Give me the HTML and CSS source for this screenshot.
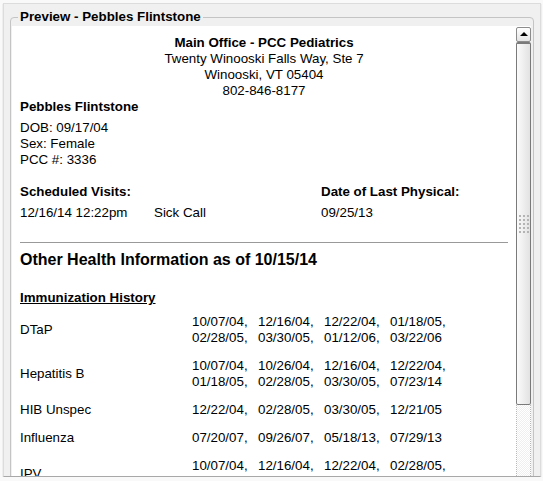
FILE: index.html
```html
<!DOCTYPE html>
<html lang="en">
<head>
  <meta charset="UTF-8" />
  <title>Preview - Pebbles Flintstone</title>
  <link rel="stylesheet" href="styles.css">
</head>
<body>
  <div class="panel">
    <fieldset class="preview">
      <legend>Preview - Pebbles Flintstone</legend>
      <div class="viewer">
        <div class="content">
          <!-- office header -->
          <div class="office">
            <div class="bold">Main Office - PCC Pediatrics</div>
            <div>Twenty Winooski Falls Way, Ste 7</div>
            <div>Winooski, VT 05404</div>
            <div>802-846-8177</div>
          </div>

          <!-- patient -->
          <div class="bold">Pebbles Flintstone</div>
          <div class="demo">
            <div>DOB: 09/17/04</div>
            <div>Sex: Female</div>
            <div>PCC #: 3336</div>
          </div>

          <!-- visits -->
          <div class="visits">
            <div class="bold">Scheduled Visits:</div>
            <div class="bold">Date of Last Physical:</div>
            <div class="visit-row">
              <span>12/16/14 12:22pm</span>
              <span>Sick Call</span>
            </div>
            <div>09/25/13</div>
          </div>

          <hr>

          <h2>Other Health Information as of 10/15/14</h2>
          <div class="section-title">Immunization History</div>

          <div class="imm-list">
            <div class="imm-row">
              <div>DTaP</div>
              <div class="dates">
                <span>10/07/04,</span><span>12/16/04,</span><span>12/22/04,</span><span>01/18/05,</span>
                <span>02/28/05,</span><span>03/30/05,</span><span>01/12/06,</span><span>03/22/06</span>
              </div>
            </div>
            <div class="imm-row">
              <div>Hepatitis B</div>
              <div class="dates">
                <span>10/07/04,</span><span>10/26/04,</span><span>12/16/04,</span><span>12/22/04,</span>
                <span>01/18/05,</span><span>02/28/05,</span><span>03/30/05,</span><span>07/23/14</span>
              </div>
            </div>
            <div class="imm-row">
              <div>HIB Unspec</div>
              <div class="dates">
                <span>12/22/04,</span><span>02/28/05,</span><span>03/30/05,</span><span>12/21/05</span>
              </div>
            </div>
            <div class="imm-row">
              <div>Influenza</div>
              <div class="dates">
                <span>07/20/07,</span><span>09/26/07,</span><span>05/18/13,</span><span>07/29/13</span>
              </div>
            </div>
            <div class="imm-row">
              <div class="ipv">IPV</div>
              <div class="dates">
                <span>10/07/04,</span><span>12/16/04,</span><span>12/22/04,</span><span>02/28/05,</span>
              </div>
            </div>
          </div>
        </div>

        <!-- fake scrollbar -->
        <div class="scrollbar">
          <div class="sb-up"><span class="arrow"></span></div>
          <div class="sb-thumb"><span class="grip"></span></div>
          <div class="sb-track"></div>
        </div>
      </div>
    </fieldset>
  </div>
</body>
</html>
```

FILE: styles.css
```css
body {
  margin: 0;
  background: #f9f9f9;
  font-family: "Liberation Sans", Arial, sans-serif;
  font-size: 13.33px;
  line-height: 16px;
  color: #000;
  overflow: hidden;
}
.panel {
  margin: 3px 2px 0 3px;
  height: 474px;
  box-sizing: border-box;
  border: 1px solid #dcdcdc;
  border-bottom: 1px solid #a8a8a8;
  background: #f0f0f0;
  padding: 5px 6px 0 6px;
  box-shadow: 0 1px 1px rgba(0, 0, 0, 0.25);
  overflow: hidden;
}
.preview {
  margin: 0;
  padding: 1px 1px 0 1px;
  border: 1px solid #c4c4c4;
  border-radius: 4px;
  height: 520px;
}
.preview legend {
  margin-left: 6px;
  padding: 0 2px;
  font-weight: bold;
  line-height: 16px;
}
.viewer {
  display: flex;
  background: #fff;
  margin-right: 1px;
  height: 470px;
}
.content {
  flex: 1;
  overflow: hidden;
  padding: 9px 8px 0 8px;
}
.bold {
  font-weight: bold;
}
.office {
  text-align: center;
}
.demo {
  margin-top: 5px;
}
.visits {
  display: grid;
  grid-template-columns: 301px 1fr;
  row-gap: 5px;
  margin-top: 16px;
}
.visit-row {
  display: grid;
  grid-template-columns: 134px 1fr;
}
hr {
  border: 0;
  border-top: 1px solid #999;
  margin: 21px 0 0 0;
}
h2 {
  font-size: 16px;
  line-height: 18px;
  margin: 8px 0 0 0;
}
.section-title {
  font-weight: bold;
  text-decoration: underline;
  margin-top: 21px;
}
.imm-list {
  margin-top: 2px;
}
.imm-row {
  display: grid;
  grid-template-columns: 172px 1fr;
  align-items: center;
  padding: 6px 0;
}
.dates {
  display: grid;
  grid-template-columns: repeat(4, 66px);
}
.ipv {
  align-self: end;
  margin-bottom: -8px;
}

/* scrollbar */
.scrollbar {
  width: 15px;
  display: flex;
  flex-direction: column;
  padding-top: 1px;
}
.sb-up {
  height: 15px;
  box-sizing: border-box;
  border: 1px solid #8c8c8c;
  border-radius: 2px;
  background: linear-gradient(#ffffff, #e4e4e4);
  display: flex;
  align-items: center;
  justify-content: center;
}
.arrow {
  width: 0;
  height: 0;
  border-left: 4px solid transparent;
  border-right: 4px solid transparent;
  border-bottom: 4px solid #000;
  margin-top: -2px;
}
.sb-thumb {
  height: 363px;
  box-sizing: border-box;
  border: 1px solid #7a7a7a;
  border-top-width: 2px;
  border-radius: 2px;
  background: linear-gradient(to right, #fbfbfb, #e2e2e2);
  display: flex;
  align-items: center;
  justify-content: center;
}
.grip {
  width: 10px;
  height: 18px;
  background: conic-gradient(from 0deg at 2px 2px, transparent 75%, #b4b4b4 0) 0 0 / 4px 4px;
  margin-left: 1px;
}
.sb-track {
  flex: 1;
  border-left: 1px dotted #b8b8b8;
  border-right: 1px dotted #b8b8b8;
  background: repeating-conic-gradient(#efefef 0 25%, #fff 0 50%) 0 0 / 2px 2px;
}
```
